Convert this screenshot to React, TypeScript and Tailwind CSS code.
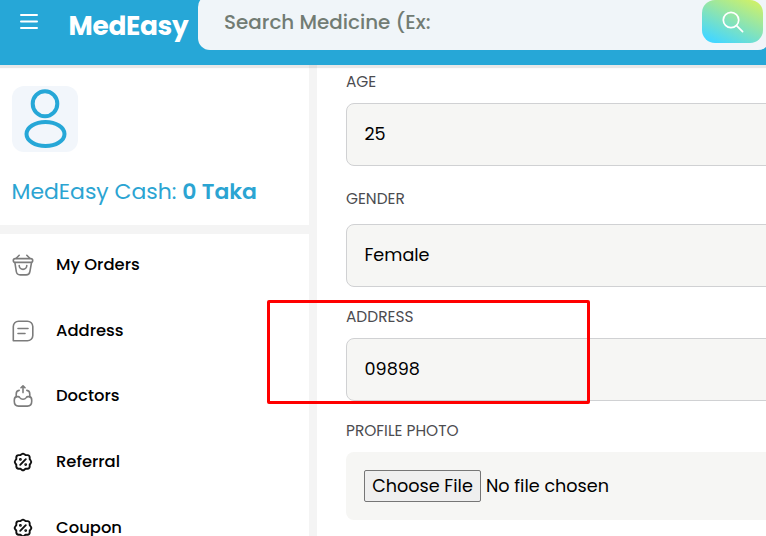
import type { ReactNode } from "react";

const gray = { fill: "none", stroke: "#7c7c7c", strokeWidth: 1.6, strokeLinecap: "round", strokeLinejoin: "round" } as const;

function BasketIcon() {
  return (
    <svg className="h-6 w-6" viewBox="0 0 24 24" {...gray}>
      <path d="M8.2 2.3 5.2 5.3M15.8 2.3l3 3" />
      <path d="M2.3 7.4c0-1.6.9-1.8 2-1.8h15.4c1.1 0 2 .2 2 1.8 0 1.9-.9 2-2 2H4.3c-1.1 0-2-.1-2-2Z" />
      <path d="m3.9 9.6 1.4 8.9c.3 2 1.1 3.4 3.9 3.4h5.9c3 0 3.5-1.3 3.8-3.2l1.6-9.1" />
      <path d="M8.2 12.6a3.8 3.8 0 0 0 7.6 0" />
    </svg>
  );
}

function NoteIcon() {
  return (
    <svg className="h-6 w-6" viewBox="0 0 24 24" {...gray}>
      <path d="M2.3 21.8V7.6c0-3 2.3-5.4 5.3-5.4h8.8c3 0 5.4 2.4 5.4 5.4v8.8c0 3-2.4 5.4-5.4 5.4Z" />
      <path d="M7 9.5h10M7 14.5h7" />
    </svg>
  );
}

function TrayIcon() {
  return (
    <svg className="h-6 w-6" viewBox="0 0 24 24" {...gray}>
      <path d="M12 8.6V2M10 3.8 12 1.8l2 2" />
      <path d="M7 12.6H6.2c-1.9 0-2.9 1.5-2.9 3.3v1.7c0 2.7 1.4 4.5 4.3 4.5h8.8c2.9 0 4.3-1.8 4.3-4.5v-1.7c0-1.8-1-3.3-2.9-3.3H17c-.8 0-1.4.4-1.8 1-.7 1-1.7 1.6-3.2 1.6s-2.5-.6-3.2-1.6c-.4-.6-1-1-1.8-1Z" />
      <path d="M5.2 12.4v-2.2C5.2 8 6.2 6.6 8.2 6.4M18.8 12.4v-2.2c0-2.2-1-3.6-3-3.8" />
    </svg>
  );
}

function PercentIcon() {
  return (
    <svg className="h-6 w-6" viewBox="0 0 24 24" fill="none" stroke="#101010" strokeWidth="1.9" strokeLinecap="round" strokeLinejoin="round">
      <path d="M10.6 4.3Q12 2.9 13.4 4.3L14.5 5.1H16.4Q18.7 5.2 18.7 7.4V9.2L19.7 10.5Q20.9 12 19.7 13.4L18.7 14.7V16.4Q18.7 18.6 16.4 18.7H14.5L13.3 19.7Q12 20.9 10.7 19.7L9.5 18.7H7.6Q5.4 18.6 5.3 16.4V14.7L4.3 13.4Q3.1 12 4.3 10.5L5.3 9.2V7.4Q5.4 5.2 7.6 5.1H9.5Z" />
      <path d="m9.2 14.8 5.6-5.6" />
      <circle cx="9.4" cy="9.4" r=".5" fill="#101010" />
      <circle cx="14.7" cy="14.6" r=".5" fill="#101010" />
    </svg>
  );
}

function MenuItem({ icon, className, children }: { icon: ReactNode; className: string; children: ReactNode }) {
  return (
    <li className={`flex h-6 shrink-0 items-center gap-[21px] pl-[11px] text-[16.4px] leading-6 font-medium whitespace-nowrap text-black ${className}`}>
      {icon}
      {children}
    </li>
  );
}

function Label({ className, children }: { className: string; children: ReactNode }) {
  return <div className={`h-[22px] text-[15.4px] leading-[22px] whitespace-nowrap text-[#4c4c50] ${className}`}>{children}</div>;
}

function Field({ className, children }: { className: string; children: ReactNode }) {
  return (
    <div className={`flex h-[63px] w-[500px] items-center rounded-lg border border-[#d0d1d3] bg-[#f6f6f4] pl-[17.5px] text-[17.6px] text-black ${className}`}>
      {children}
    </div>
  );
}

export default function App() {
  return (
    <div className="relative flex h-[536px] w-[766px] flex-col overflow-hidden bg-[#f4f4f4] font-['Poppins','Inter',sans-serif]">
      <header className="z-10 flex h-[65px] shrink-0 items-start bg-[#26a7d7] shadow-[0_3px_1px_rgba(0,0,0,0.09)]">
        <div className="flex w-[198px] shrink-0">
          <svg className="mt-3 ml-[19px] h-[18px] w-[20px]" viewBox="0 0 20 18" fill="none" stroke="white" strokeWidth="2" strokeLinecap="round">
            <path d="M2 3h16M2 9.5h16M2 16h16" />
          </svg>
          <div className="mt-[6px] ml-[29.5px] text-[26.4px] leading-10 font-bold tracking-[-0.3px] text-white">MedEasy</div>
        </div>
        <div className="-mt-[5px] flex h-[55px] w-[572px] shrink-0 justify-between rounded-xl bg-[#f0f5f9] pt-[5px] pr-[7px] pl-[26px]">
          <span className="mt-[2px] text-[19.9px] leading-10 font-medium whitespace-nowrap text-[#727c74]">Search Medicine (Ex:</span>
          <button className="flex h-[43px] w-[61px] items-center justify-center rounded-[13px] bg-[linear-gradient(25deg,#44d7ff_10%,#d1f166_95%)]">
            <svg className="h-[22px] w-[22px]" viewBox="0 0 22 22" fill="none" stroke="white" strokeWidth="1.7" strokeLinecap="round">
              <circle cx="9" cy="9" r="7.7" />
              <path d="m14.6 14.6 6 6" />
            </svg>
          </button>
        </div>
      </header>

      <div className="flex min-h-0 flex-1 gap-2">
        <aside className="flex w-[309px] shrink-0 flex-col gap-[9px]">
          <section className="h-[160px] shrink-0 bg-white pt-[21px] pl-3">
            <div className="h-[66px] w-[66px] rounded-xl bg-[#f2f6fb]">
              <svg className="h-[66px] w-[66px]" viewBox="0 0 66 66" fill="none" stroke="#26a7d7" strokeWidth="4">
                <ellipse cx="33" cy="17.7" rx="12.3" ry="12.5" />
                <ellipse cx="33.5" cy="48" rx="19" ry="12" />
              </svg>
            </div>
            <p className="mt-[25px] -ml-[0.5px] text-[21.95px] leading-[30px] whitespace-nowrap text-[#2ba4d2]">
              MedEasy Cash: <b className="font-semibold">0 Taka</b>
            </p>
          </section>
          <ul className="flex min-h-0 flex-1 flex-col bg-white pt-[19px]">
            <MenuItem className="" icon={<BasketIcon />}>My Orders</MenuItem>
            <MenuItem className="mt-[42px]" icon={<NoteIcon />}>Address</MenuItem>
            <MenuItem className="mt-[41px]" icon={<TrayIcon />}>Doctors</MenuItem>
            <MenuItem className="mt-[42px]" icon={<PercentIcon />}>Referral</MenuItem>
            <MenuItem className="mt-[42px]" icon={<PercentIcon />}>Coupon</MenuItem>
          </ul>
        </aside>

        <main className="min-w-0 flex-1 overflow-hidden bg-white pt-[6px] pl-[29px]">
          <Label className="">AGE</Label>
          <Field className="mt-[10px]">25</Field>
          <Label className="mt-[22px]">GENDER</Label>
          <Field className="mt-[14px]">Female</Field>
          <Label className="mt-[19px]">ADDRESS</Label>
          <Field className="mt-[10px]">09898</Field>
          <Label className="mt-[19px]">PROFILE PHOTO</Label>
          <div className="mt-[10px] flex h-[68px] w-[500px] items-center gap-[5px] rounded-lg bg-[#f6f6f4] pl-[18px] text-[17.6px] whitespace-nowrap text-black">
            <button className="flex h-8 w-[117px] items-center justify-center rounded-[2px] border border-[#767676] bg-[#efefef]">Choose File</button>
            <span>No file chosen</span>
          </div>
        </main>
      </div>

      <div className="absolute top-[300px] left-[267px] z-20 h-[104px] w-[323px] rounded-[2px] border-[3px] border-[#ff0000]" />
    </div>
  );
}
